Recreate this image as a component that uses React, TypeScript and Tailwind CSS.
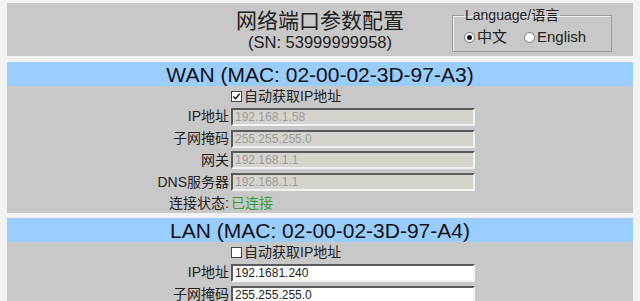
import React from 'react'

const font = { fontFamily: '"Liberation Sans", Arial, "Noto Sans CJK SC", sans-serif' }

function Check({ on }: { on: boolean }) {
  return (
    <span className="inline-flex items-center justify-center w-[11px] h-[11px] border border-[#444] bg-white mr-[2px]">
      {on && (
        <svg viewBox="0 0 10 10" className="w-[9px] h-[9px]">
          <path d="M1.5 5 L4 7.5 L8.5 2" fill="none" stroke="#111" strokeWidth="1.6" />
        </svg>
      )}
    </span>
  )
}

function Radio({ on }: { on: boolean }) {
  return (
    <span className="inline-flex items-center justify-center w-[11px] h-[11px] rounded-full border border-[#777] bg-white mr-[2px]">
      {on && <span className="w-[5px] h-[5px] rounded-full bg-[#111]" />}
    </span>
  )
}

function Field({ label, value, disabled }: { label: string; value: string; disabled?: boolean }) {
  return (
    <div className="grid grid-cols-[222px_1fr] gap-[2px] items-center h-[21.75px]">
      <span className="text-right text-[14px] text-[#222]">{label}</span>
      <div
        className={`w-[244px] h-[18px] border-2 border-t-[#5a5a5a] border-l-[#5a5a5a] border-b-[#f2f2f2] border-r-[#f2f2f2] flex items-center px-[2px] text-[12px] leading-none ${
          disabled ? 'bg-[#d7d4cd] text-[#9a9a9a]' : 'bg-white text-[#222]'
        }`}
      >
        {value}
      </div>
    </div>
  )
}

function Section({
  title,
  auto,
  rows,
  status,
}: {
  title: string
  auto: boolean
  rows: { label: string; value: string }[]
  status?: string
}) {
  return (
    <div className="bg-[#c8c8c8]">
      <div className="h-[24px] bg-[#99ccff] flex items-center justify-center text-[21px] text-[#111] leading-none">
        {title}
      </div>
      <div className="grid grid-cols-[222px_1fr] gap-[2px] items-center h-[20px]">
        <span />
        <span className="flex items-center text-[14px] text-[#222]">
          <Check on={auto} />
          自动获取IP地址
        </span>
      </div>
      {rows.map((r) => (
        <Field key={r.label} label={r.label} value={r.value} disabled={auto} />
      ))}
      {status && (
        <div className="grid grid-cols-[222px_1fr] gap-[2px] items-center h-[20px]">
          <span className="text-right text-[14px] text-[#222]">连接状态:</span>
          <span className="text-[14px] text-[#35a035]">{status}</span>
        </div>
      )}
    </div>
  )
}

export default function App() {
  return (
    <div className="min-h-screen bg-[#f3f3f3] px-[7px] pt-[3px]" style={font}>
      {/* Header */}
      <div className="bg-[#c8c8c8] h-[53px] grid grid-cols-[1fr_auto_1fr] items-center">
        <div />
        <div className="flex flex-col items-center text-[#222]">
          <span className="text-[21px] leading-[24px]">网络端口参数配置</span>
          <span className="text-[16.5px] leading-[18px]">(SN: 53999999958)</span>
        </div>
        <div className="flex justify-end pr-[21px]">
          <fieldset className="w-[160px] h-[44px] border border-[#9a9a9a] shadow-[inset_1px_1px_0_#eee] px-[11px] mt-[1px]">
            <legend className="text-[14px] text-[#222] px-[1px] leading-[15px]">Language/语言</legend>
            <div className="flex items-center text-[15px] text-[#222] mt-[3px]">
              <span className="flex items-center mr-[17px]">
                <Radio on />
                中文
              </span>
              <span className="flex items-center">
                <Radio on={false} />
                English
              </span>
            </div>
          </fieldset>
        </div>
      </div>

      <div className="mt-[6px]">
        <Section
          title="WAN (MAC: 02-00-02-3D-97-A3)"
          auto
          rows={[
            { label: 'IP地址', value: '192.168.1.58' },
            { label: '子网掩码', value: '255.255.255.0' },
            { label: '网关', value: '192.168.1.1' },
            { label: 'DNS服务器', value: '192.168.1.1' },
          ]}
          status="已连接"
        />
      </div>

      <div className="mt-[5px]">
        <Section
          title="LAN (MAC: 02-00-02-3D-97-A4)"
          auto={false}
          rows={[
            { label: 'IP地址', value: '192.1681.240' },
            { label: '子网掩码', value: '255.255.255.0' },
          ]}
        />
      </div>
    </div>
  )
}
